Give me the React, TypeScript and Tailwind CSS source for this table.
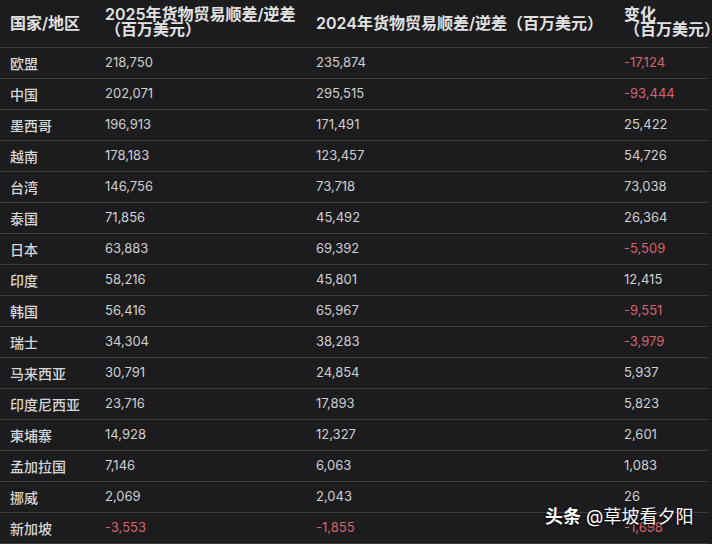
import React from "react";

type Row = [string, string, string, string];

const rows: Row[] = [
  ["欧盟", "218,750", "235,874", "-17,124"],
  ["中国", "202,071", "295,515", "-93,444"],
  ["墨西哥", "196,913", "171,491", "25,422"],
  ["越南", "178,183", "123,457", "54,726"],
  ["台湾", "146,756", "73,718", "73,038"],
  ["泰国", "71,856", "45,492", "26,364"],
  ["日本", "63,883", "69,392", "-5,509"],
  ["印度", "58,216", "45,801", "12,415"],
  ["韩国", "56,416", "65,967", "-9,551"],
  ["瑞士", "34,304", "38,283", "-3,979"],
  ["马来西亚", "30,791", "24,854", "5,937"],
  ["印度尼西亚", "23,716", "17,893", "5,823"],
  ["柬埔寨", "14,928", "12,327", "2,601"],
  ["孟加拉国", "7,146", "6,063", "1,083"],
  ["挪威", "2,069", "2,043", "26"],
  ["新加坡", "-3,553", "-1,855", "-1,698"],
];

const num = (v: string) =>
  v.startsWith("-") ? "text-[#d8626a]" : "text-[#cfcfcf]";

export default function App() {
  return (
    <div
      className="relative w-[712px] h-[544px] overflow-hidden bg-[#1c1c1e]"
      style={{ fontFamily: 'Inter, "Noto Sans CJK SC", sans-serif' }}
    >
      <div className="grid grid-cols-[95px_211px_308px_1fr] pl-[10px] h-[48px] items-center border-b border-[#3d3d3f] mr-[4px] text-[16px] leading-[15px] font-semibold text-[#e2e2e2]">
        <div>国家/地区</div>
        <div className="-mt-[3px]">
          <div>2025年货物贸易顺差/逆差</div>
          <div className="whitespace-nowrap">（百万美元）</div>
        </div>
        <div className="whitespace-nowrap">2024年货物贸易顺差/逆差（百万美元）</div>
        <div className="-mt-[3px]">
          <div>变化</div>
          <div className="whitespace-nowrap">（百万美元）</div>
        </div>
      </div>
      {rows.map((r) => (
        <div
          key={r[0]}
          className="grid grid-cols-[95px_211px_308px_1fr] pl-[10px] h-[31px] items-center border-b border-[#3d3d3f] mr-[4px]"
        >
          <div className="text-[14px] text-[#d6d6d6] font-medium">{r[0]}</div>
          <div className={`text-[13px] ${num(r[1])}`}>{r[1]}</div>
          <div className={`text-[13px] ${num(r[2])}`}>{r[2]}</div>
          <div className={`text-[13px] ${num(r[3])}`}>{r[3]}</div>
        </div>
      ))}
      <div
        className="absolute left-[545px] top-[506px] text-[18px] leading-[22px] text-white whitespace-nowrap"
        style={{ textShadow: "0 0 2px rgba(0,0,0,0.9), 0 1px 2px rgba(0,0,0,0.8)" }}
      >
        <span className="font-bold">头条</span> @草坡看夕阳
      </div>
    </div>
  );
}
